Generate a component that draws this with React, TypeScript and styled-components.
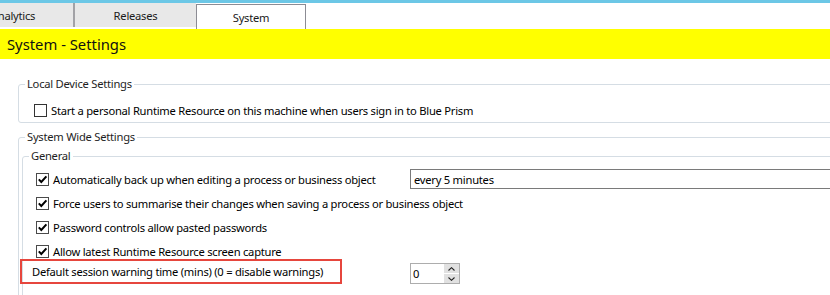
import styled, { createGlobalStyle } from "styled-components";

const GlobalStyle = createGlobalStyle`
  html, body {
    margin: 0;
    padding: 0;
    background: #ffffff;
  }
  body {
    font-family: "Noto Sans", "Open Sans", sans-serif;
    font-size: 11.2px;
    letter-spacing: -0.25px;
    color: #000000;
  }
`;

const Page = styled.div`
  width: 830px;
  height: 295px;
  overflow: hidden;
  background: #ffffff;
`;

const TopStrip = styled.div`
  height: 3px;
  background: #6cc7e6;
`;

const TabBar = styled.div`
  display: flex;
  align-items: flex-start;
  height: 26px;
  overflow: hidden;
`;

const Tab = styled.div<{ $width: number; $shift?: number; $divider?: boolean }>`
  box-sizing: border-box;
  flex: none;
  width: ${(p) => p.$width}px;
  margin-left: ${(p) => p.$shift ?? 0}px;
  height: 24px;
  display: flex;
  align-items: center;
  justify-content: center;
  background: #e8e8e8;
  border-right: ${(p) => (p.$divider ? "2px solid #a2a2a6" : "none")};
  color: #1a1a1a;
`;

const ActiveTab = styled(Tab)`
  height: 25px;
  margin-top: 1px;
  background: #ffffff;
  border: 1px solid #8c8c94;
  border-bottom: none;
`;

const Header = styled.div`
  height: 30px;
  display: flex;
  align-items: center;
  padding-left: 7px;
  background: #ffff00;
  font-size: 14.8px;
  letter-spacing: 0;
  color: #111111;
`;

const Content = styled.div`
  padding: 17px 0 0 18px;
`;

const Group = styled.fieldset<{ $indent?: number; $gapTop?: number }>`
  margin: ${(p) => p.$gapTop ?? 0}px 0 0 ${(p) => p.$indent ?? 0}px;
  padding: 0;
  min-width: 0;
  width: 900px;
  border: 1px solid #d5dde4;
  border-radius: 3px;
`;

const Legend = styled.legend`
  margin-left: 6px;
  padding: 0 2px;
  line-height: 16px;
  color: #1e1e1e;
`;

const LocalRow = styled.div`
  display: flex;
  align-items: center;
  gap: 4px;
  height: 20px;
  margin-top: 8px;
  padding: 0 0 2px 15px;
`;

const GeneralBody = styled.div`
  padding: 3px 0 40px 13px;
`;

const Row = styled.div<{ $pullUp?: number }>`
  display: grid;
  grid-template-columns: 374px 1fr;
  align-items: center;
  height: 24px;
  margin-top: ${(p) => (p.$pullUp ? -p.$pullUp : 0)}px;
`;

const AnnotatedRow = styled(Row)`
  height: 25px;
  align-items: end;
`;

const CheckLabel = styled.label`
  display: flex;
  align-items: center;
  gap: 4px;
  white-space: nowrap;
`;

const Box = styled.span<{ $checked?: boolean }>`
  box-sizing: border-box;
  flex: none;
  width: 13px;
  height: 13px;
  display: flex;
  align-items: center;
  justify-content: center;
  border: 1px solid ${(p) => (p.$checked ? "#4a4a4a" : "#333333")};
  background: #ffffff;
`;

const Highlight = styled.div`
  box-sizing: border-box;
  width: 322px;
  height: 25px;
  margin-left: -16px;
  display: flex;
  align-items: center;
  padding-left: 10px;
  border: 2px solid #e6463d;
  white-space: nowrap;
`;

const Combo = styled.div`
  box-sizing: border-box;
  width: 460px;
  height: 20px;
  display: flex;
  align-items: center;
  padding-left: 3px;
  border: 1px solid #7a7a7a;
  white-space: nowrap;
`;

const Spin = styled.div`
  box-sizing: border-box;
  width: 50px;
  height: 21px;
  display: flex;
  border: 1px solid #adadad;
  background: #ffffff;
`;

const SpinValue = styled.div`
  flex: 1;
  display: flex;
  align-items: center;
  padding-left: 2px;
`;

const SpinButtons = styled.div`
  width: 15px;
  display: flex;
  flex-direction: column;
  gap: 1px;
`;

const SpinButton = styled.div`
  flex: 1;
  display: flex;
  align-items: center;
  justify-content: center;
  background: #e1e1e1;
`;

const Check = () => (
  <svg width="11" height="11" viewBox="0 0 11 11">
    <path d="M1.8 5.4 L4.3 8 L9.4 2.4" fill="none" stroke="#000" strokeWidth="2" />
  </svg>
);

const Chevron = ({ up }: { up?: boolean }) => (
  <svg width="7" height="4" viewBox="0 0 7 4">
    <path
      d={up ? "M0.5 3.5 L3.5 0.7 L6.5 3.5" : "M0.5 0.5 L3.5 3.3 L6.5 0.5"}
      fill="none"
      stroke="#222"
      strokeWidth="1.1"
    />
  </svg>
);

const CheckRow = ({ text, children }: { text: string; children?: React.ReactNode }) => (
  <Row>
    <CheckLabel>
      <Box $checked>
        <Check />
      </Box>
      {text}
    </CheckLabel>
    <div>{children}</div>
  </Row>
);

export default function App() {
  return (
    <>
      <GlobalStyle />
      <Page>
        <TopStrip />
        <TabBar>
          <Tab $width={122} $shift={-47} $divider>
            Analytics
          </Tab>
          <Tab $width={121}>Releases</Tab>
          <ActiveTab $width={110}>System</ActiveTab>
        </TabBar>
        <Header>System - Settings</Header>
        <Content>
          <Group>
            <Legend>Local Device Settings</Legend>
            <LocalRow>
              <Box />
              Start a personal Runtime Resource on this machine when users sign in to Blue Prism
            </LocalRow>
          </Group>
          <Group $gapTop={6}>
            <Legend>System Wide Settings</Legend>
            <Group $indent={3} $gapTop={3}>
              <Legend>General</Legend>
              <GeneralBody>
                <CheckRow text="Automatically back up when editing a process or business object">
                  <Combo>every 5 minutes</Combo>
                </CheckRow>
                <CheckRow text="Force users to summarise their changes when saving a process or business object" />
                <CheckRow text="Password controls allow pasted passwords" />
                <CheckRow text="Allow latest Runtime Resource screen capture" />
                <AnnotatedRow $pullUp={4}>
                  <Highlight>Default session warning time (mins) (0 = disable warnings)</Highlight>
                  <Spin>
                    <SpinValue>0</SpinValue>
                    <SpinButtons>
                      <SpinButton>
                        <Chevron up />
                      </SpinButton>
                      <SpinButton>
                        <Chevron />
                      </SpinButton>
                    </SpinButtons>
                  </Spin>
                </AnnotatedRow>
              </GeneralBody>
            </Group>
          </Group>
        </Content>
      </Page>
    </>
  );
}
